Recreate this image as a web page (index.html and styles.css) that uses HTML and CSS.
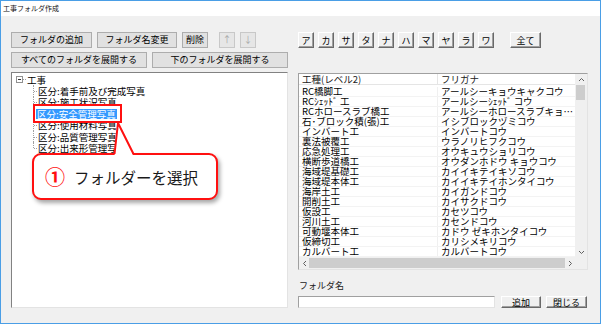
FILE: index.html
```html
<!DOCTYPE html>
<html lang="ja">
<head>
<meta charset="utf-8">
<title>工事フォルダ作成</title>
<link rel="stylesheet" href="styles.css">
</head>
<body>
<div class="window">
  <div class="titlebar">工事フォルダ作成</div>
  <div class="body">
    <div class="left">
      <div class="btnrow">
        <button class="btn w-add">フォルダの追加</button>
        <button class="btn w-ren">フォルダ名変更</button>
        <button class="btn w-del">削除</button>
        <button class="btn w-arr up" disabled>↑</button>
        <button class="btn w-arr" disabled>↓</button>
      </div>
      <div class="btnrow">
        <button class="btn w-exp">すべてのフォルダを展開する</button>
        <button class="btn w-exp">下のフォルダを展開する</button>
      </div>
      <div class="tree">
        <div class="node root"><span class="exp"></span><span class="hline"></span><span class="label">工事</span></div>
        <div class="children">
          <div class="node child"><span class="label">区分:着手前及び完成写真</span></div>
          <div class="node child"><span class="label">区分:施工状況写真</span></div>
          <div class="node child"><span class="focus"><span class="sel">区分:安全管理写真</span></span></div>
          <div class="node child"><span class="label">区分:使用材料写真</span></div>
          <div class="node child"><span class="label">区分:品質管理写真</span></div>
          <div class="node child"><span class="label">区分:出来形管理写真</span></div>
        </div>
        <div class="callout"><span class="num">①</span><span class="ctext">フォルダーを選択</span></div>
        <svg class="tail" width="30" height="40" viewBox="0 0 30 40">
          <polygon points="8,5 4.5,38 23.5,38" fill="#fff"/>
          <polyline points="4.5,36 8,5 23.5,36" fill="none" stroke="#ff1010" stroke-width="2" stroke-linejoin="round"/>
        </svg>
      </div>
    </div>
    <div class="right">
      <div class="kana">
        <button class="kbtn">ア</button>
        <button class="kbtn">カ</button>
        <button class="kbtn">サ</button>
        <button class="kbtn">タ</button>
        <button class="kbtn">ナ</button>
        <button class="kbtn">ハ</button>
        <button class="kbtn">マ</button>
        <button class="kbtn">ヤ</button>
        <button class="kbtn">ラ</button>
        <button class="kbtn">ワ</button>
        <button class="kbtn all">全て</button>
      </div>
      <div class="list">
        <div class="list-main">
          <div class="grid">
            <div class="hdr"><div class="c1">工種(レベル2)</div><div class="c2">フリガナ</div></div>
            <div class="rows">
              <div class="row"><div class="c1">RC橋脚工</div><div class="c2">アールシーキョウキャクコウ</div></div>
              <div class="row"><div class="c1">RCｼｪｯﾄﾞ 工</div><div class="c2">アールシーｼｪｯﾄﾞ コウ</div></div>
              <div class="row"><div class="c1">RCホロースラブ橋工</div><div class="c2 trunc">アールシーホロースラブキョウコウ</div></div>
              <div class="row"><div class="c1">石･ブロック積(張)工</div><div class="c2">イシブロックヅミコウ</div></div>
              <div class="row"><div class="c1">インバート工</div><div class="c2">インバートコウ</div></div>
              <div class="row"><div class="c1">裏法被覆工</div><div class="c2">ウラノリヒフクコウ</div></div>
              <div class="row"><div class="c1">応急処理工</div><div class="c2">オウキュウショリコウ</div></div>
              <div class="row"><div class="c1">横断歩道橋工</div><div class="c2">オウダンホドウ キョウコウ</div></div>
              <div class="row"><div class="c1">海域堤基礎工</div><div class="c2">カイイキテイキソコウ</div></div>
              <div class="row"><div class="c1">海域堤本体工</div><div class="c2">カイイキテイホンタイコウ</div></div>
              <div class="row"><div class="c1">海岸土工</div><div class="c2">カイガンドコウ</div></div>
              <div class="row"><div class="c1">開削土工</div><div class="c2">カイサクドコウ</div></div>
              <div class="row"><div class="c1">仮設工</div><div class="c2">カセツコウ</div></div>
              <div class="row"><div class="c1">河川土工</div><div class="c2">カセンドコウ</div></div>
              <div class="row"><div class="c1">可動堰本体工</div><div class="c2">カドウ ゼキホンタイコウ</div></div>
              <div class="row"><div class="c1">仮締切工</div><div class="c2">カリシメキリコウ</div></div>
              <div class="row"><div class="c1">カルバート工</div><div class="c2">カルバートコウ</div></div>
            </div>
          </div>
          <div class="vscroll">
            <div class="sarrow"><svg width="7" height="5" viewBox="0 0 7 5"><polyline points="1,4 3.5,1.5 6,4" fill="none" stroke="#606060" stroke-width="1"/></svg></div>
            <div class="vthumb"></div>
            <div class="sarrow down"><svg width="7" height="5" viewBox="0 0 7 5"><polyline points="1,1 3.5,3.5 6,1" fill="none" stroke="#606060" stroke-width="1"/></svg></div>
          </div>
        </div>
        <div class="hscroll">
          <div class="harrow"><svg width="5" height="7" viewBox="0 0 5 7"><polyline points="4,1 1.5,3.5 4,6" fill="none" stroke="#606060" stroke-width="1"/></svg></div>
          <div class="hthumb"></div>
          <div class="harrow"><svg width="5" height="7" viewBox="0 0 5 7"><polyline points="1,1 3.5,3.5 1,6" fill="none" stroke="#606060" stroke-width="1"/></svg></div>
          <div class="corner"></div>
        </div>
      </div>
      <div class="fname">フォルダ名</div>
      <div class="inrow">
        <div class="input"></div>
        <button class="kbtn b-add">追加</button>
        <button class="kbtn b-close">閉じる</button>
      </div>
    </div>
  </div>
</div>
</body>
</html>
```
FILE: styles.css
```css
* { box-sizing: border-box; }
html, body { margin: 0; padding: 0; background: #fff; }
body {
  font-family: "Noto Sans CJK JP", "Noto Sans", sans-serif;
  font-size: 9px;
  color: #000;
}
button {
  -webkit-appearance: none;
  appearance: none;
  font-family: inherit;
  margin: 0;
  padding: 0;
  color: #000;
}
.window {
  width: 601px;
  height: 324px;
  border: 1px solid #4a9ee6;
  background: #f0f0f0;
  display: flex;
  flex-direction: column;
}
.titlebar {
  flex: none;
  height: 15px;
  background: #fff;
  font-size: 7px;
  line-height: 15px;
  padding-left: 2px;
  color: #111;
}
.body {
  flex: 1;
  display: flex;
  padding: 16px 0 0 10px;
}
.left {
  width: 277px;
  display: flex;
  flex-direction: column;
}
.btnrow {
  display: flex;
  gap: 5px;
  height: 16px;
  margin-bottom: 4px;
}
.btn {
  height: 16px;
  border: 1px solid #adadad;
  background: #e1e1e1;
  font-size: 9px;
  line-height: 14px;
  text-align: center;
}
.btn[disabled] { color: #a6a6a6; border-color: #c8c8c8; background: #e6e6e6; }
.w-add { width: 81px; }
.w-ren { width: 80px; }
.w-del { width: 26px; }
.w-arr { width: 16px; }
.w-arr.up { margin-left: 6px; }
.w-exp { width: 136px; }

.tree {
  position: relative;
  height: 236px;
  background: #fff;
  border: 1px solid;
  border-color: #828282 #e3e3e3 #e3e3e3 #828282;
  padding-top: 1px;
  font-size: 9.5px;
}
.node {
  height: 11.4px;
  display: flex;
  align-items: center;
  white-space: nowrap;
}
.root { padding-left: 4px; }
.exp {
  position: relative;
  width: 7px;
  height: 7px;
  border: 1px solid #919191;
  background: #fff;
}
.exp::after {
  content: "";
  position: absolute;
  left: 1px;
  right: 1px;
  top: 2px;
  height: 1px;
  background: #333;
}
.hline {
  width: 3px;
  margin-right: 1px;
  border-top: 1px dotted #a0a0a0;
}
.child {
  position: relative;
  padding-left: 24px;
}
.child::before {
  content: "";
  position: absolute;
  left: 21px;
  top: 0;
  bottom: 0;
  border-left: 1px dotted #a0a0a0;
}
.child:last-child::before { bottom: 50%; }
.child::after {
  content: "";
  position: absolute;
  left: 22px;
  width: 3px;
  top: 50%;
  border-top: 1px dotted #a0a0a0;
}
.child .label { padding: 0 2px; }
.focus {
  position: relative;
  z-index: 2;
  display: inline-flex;
  border: 2px solid #ff1010;
  background: #fff;
  padding: 3px 3px 2px 1px;
  margin-left: -3px;
}
.sel {
  background: #3399ff;
  color: #fff;
  line-height: 10px;
  padding: 0 1px;
}
.callout {
  position: absolute;
  left: 20px;
  top: 80px;
  width: 186px;
  height: 47px;
  border: 2px solid #ff1010;
  border-radius: 9px;
  background: #fff;
  box-shadow: 2px 3px 4px rgba(0, 0, 0, 0.35);
  display: flex;
  align-items: center;
  padding-left: 11px;
  z-index: 3;
}
.num {
  color: #ff1010;
  font-size: 20px;
  font-weight: bold;
  line-height: 20px;
}
.ctext {
  margin-left: 9px;
  font-size: 15.5px;
  line-height: 20px;
  color: #1a1a1a;
}
.tail {
  position: absolute;
  left: 98px;
  top: 45px;
  z-index: 4;
}

.right {
  width: 290px;
  margin-left: 10px;
  display: flex;
  flex-direction: column;
}
.kana {
  display: flex;
  gap: 4px;
  height: 16px;
}
.kbtn {
  width: 16px;
  height: 16px;
  background: #f0f0f0;
  border: 1px solid;
  border-color: #fff #696969 #696969 #fff;
  box-shadow: inset -1px -1px 0 #a0a0a0;
  font-size: 9px;
  line-height: 13px;
  text-align: center;
}
.kbtn.all { width: 31px; margin-left: 12px; }
.list {
  margin-top: 25px;
  height: 197px;
  border: 1px solid;
  border-color: #a0a0a0 #e3e3e3 #e3e3e3 #a0a0a0;
  background: #fff;
  display: flex;
  flex-direction: column;
  font-size: 9.5px;
}
.list-main {
  display: flex;
  height: 183px;
}
.grid {
  width: 276px;
}
.hdr {
  display: flex;
  height: 11px;
  border-bottom: 1px solid #e5e5e5;
  line-height: 10px;
  color: #222;
}
.c1 {
  width: 139px;
  flex: none;
  padding-left: 3px;
  border-right: 1px solid #e5e5e5;
  white-space: nowrap;
}
.c2 {
  flex: 1;
  min-width: 0;
  padding-left: 3px;
  padding-right: 2px;
  white-space: nowrap;
}
.c2.trunc {
  overflow-x: clip;
  overflow-y: visible;
  text-overflow: ellipsis;
}
.rows { padding-top: 2px; }
.row {
  display: flex;
  height: 10px;
  line-height: 9px;
  border-bottom: 1px solid #f3f3f3;
}
.row .c1 { border-right-color: #f0f0f0; }
.vscroll {
  width: 12px;
  background: #f0f0f0;
  display: flex;
  flex-direction: column;
}
.sarrow {
  height: 11px;
  display: flex;
  align-items: center;
  justify-content: center;
}
.sarrow.down { margin-top: auto; height: 10px; }
.vthumb {
  width: 9px;
  height: 15px;
  margin-left: 1px;
  background: #cdcdcd;
}
.hscroll {
  height: 12px;
  display: flex;
  background: #f0f0f0;
}
.harrow {
  width: 10px;
  display: flex;
  align-items: center;
  justify-content: center;
}
.hthumb {
  flex: 1;
  margin: 1px 0;
  background: #cdcdcd;
}
.corner { width: 12px; background: #f0f0f0; }
.fname {
  margin-top: 10px;
  line-height: 12px;
  padding-left: 1px;
  color: #222;
}
.inrow {
  margin-top: 4px;
  display: flex;
  height: 12px;
}
.input {
  width: 197px;
  height: 12px;
  background: #fff;
  border: 1px solid;
  border-color: #a0a0a0 #e3e3e3 #e3e3e3 #a0a0a0;
}
.b-add { width: 40px; height: 12px; line-height: 9px; margin-left: 6px; }
.b-close { width: 41px; height: 12px; line-height: 9px; margin-left: 5px; }
```
